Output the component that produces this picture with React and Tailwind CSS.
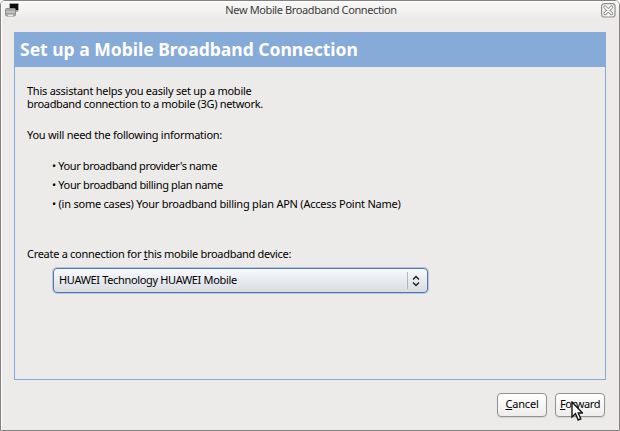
const requirements = [
  { text: "• Your broadband provider's name", tracking: 'tracking-[-0.38px]' },
  { text: '• Your broadband billing plan name', tracking: 'tracking-[-0.36px]' },
  { text: '• (in some cases) Your broadband billing plan APN (Access Point Name)', tracking: 'tracking-[-0.23px]' },
];

function WindowIcon() {
  return (
    <svg className="h-4 w-4" viewBox="0 0 16 16" fill="none">
      <rect x="4.5" y="0.5" width="9" height="7" rx="1" fill="#0c0c0c" stroke="#a5a5a5" />
      <path d="M10 8.5h3" stroke="#aaa" />
      <rect x="0.5" y="5.5" width="10" height="7.5" rx="1.2" fill="#b4b4b4" stroke="#8e8e8e" />
      <path d="M1 7h9" stroke="#a0a0a0" />
      <path d="M1.5 9h8" stroke="#cecece" />
      <path d="M1 10.8h9" stroke="#979797" />
      <path d="M3 12.3h5" stroke="#fff" />
    </svg>
  );
}

function CloseIcon() {
  return (
    <svg className="h-[15px] w-[15px]" viewBox="0 0 15 15" fill="none">
      <rect x="0.6" y="0.6" width="13.4" height="13.4" rx="2.5" fill="#f4f4f3" stroke="#8f8e8d" strokeWidth="1.2" />
      <path d="M4.1 4.1l6.4 6.4M10.5 4.1l-6.4 6.4" stroke="#888" strokeWidth="3.4" strokeLinecap="round" />
      <path d="M4.1 4.1l6.4 6.4M10.5 4.1l-6.4 6.4" stroke="#fff" strokeWidth="1.7" strokeLinecap="round" />
    </svg>
  );
}

function Cursor() {
  return (
    <svg className="absolute left-[15px] top-[7px] h-5 w-3" viewBox="0 0 12 20">
      <path
        d="M1 1v15l3.5-3.3L7.2 19l2.6-1.2L7.2 12h4.3z"
        fill="#fff"
        stroke="#111"
        strokeWidth="1.4"
      />
    </svg>
  );
}

function DialogButton({ children }) {
  return (
    <button
      type="button"
      className="relative flex h-[24px] w-[50px] items-center justify-center whitespace-nowrap rounded-[4px] border border-[#94928f] bg-linear-to-b from-white to-[#eeedec] pb-[3px] shadow-[0_1px_1px_#d6d3d0]"
    >
      {children}
    </button>
  );
}

export default function App() {
  return (
    <div className="flex h-[431px] w-[620px] flex-col overflow-hidden rounded-t-[5px] border border-[#84817e] bg-[#edebe9] font-['Noto_Sans',sans-serif] text-[11px] leading-[13px] text-black">
      <header className="flex h-[31px] shrink-0 items-start justify-between bg-linear-to-b from-[#f9f9f8] to-[#edebe9] to-60% pl-1 pr-[3px] pt-[2px] shadow-[inset_1px_1px_#fff]">
        <WindowIcon />
        <h1 className="tracking-[-0.39px] text-[#3c3c3c]">New Mobile Broadband Connection</h1>
        <CloseIcon />
      </header>

      <div className="flex grow flex-col border-l border-white">
        <main className="ml-[12px] flex h-[348px] w-[592px] shrink-0 flex-col border border-[#86abd9]">
          <h2 className="flex h-[34px] shrink-0 items-center whitespace-nowrap bg-[#86abd9] pb-px pl-[5px] text-[17.5px] font-bold text-white">
            Set up a Mobile Broadband Connection
          </h2>
          <div className="flex flex-col whitespace-nowrap pl-3 pt-[17px]">
            <p className="tracking-[-0.25px]">This assistant helps you easily set up a mobile</p>
            <p className="tracking-[-0.32px]">broadband connection to a mobile (3G) network.</p>
            <p className="mt-[18px] tracking-[-0.26px]">You will need the following information:</p>
            <ul className="mt-[18px] flex flex-col gap-[6px] pl-[25px]">
              {requirements.map((item) => (
                <li key={item.text} className={item.tracking}>{item.text}</li>
              ))}
            </ul>
            <label className="mt-[37px] tracking-[-0.29px]">
              Create a connection for <u>t</u>his mobile broadband device:
            </label>
            <div className="ml-[26px] mt-[8px] flex h-[25px] w-[375px] items-center justify-between rounded-[4px] border border-[#5578a8] bg-linear-to-b from-[#f7f9fd] to-[#d9dce1] pl-[5px] shadow-[0_0_0_1px_#b5c7df]">
              <span className="pb-[2px] tracking-[-0.34px]">HUAWEI Technology HUAWEI Mobile</span>
              <span className="flex h-[17px] w-[20px] items-center justify-center border-l border-[#b4b6ba] pr-[3px]">
                <svg className="h-3 w-2" viewBox="0 0 8 12" fill="none" stroke="#222" strokeWidth="1.5">
                  <path d="M1 4.5l3-3 3 3M1 7.5l3 3 3-3" />
                </svg>
              </span>
            </div>
          </div>
        </main>

        <footer className="mt-[13px] flex justify-end gap-2 pr-[14px]">
          <DialogButton>
            <span className="tracking-[-0.2px]"><u>C</u>ancel</span>
          </DialogButton>
          <DialogButton>
            <span className="tracking-[-0.4px]"><u>F</u>orward</span>
            <Cursor />
          </DialogButton>
        </footer>
      </div>
    </div>
  );
}
